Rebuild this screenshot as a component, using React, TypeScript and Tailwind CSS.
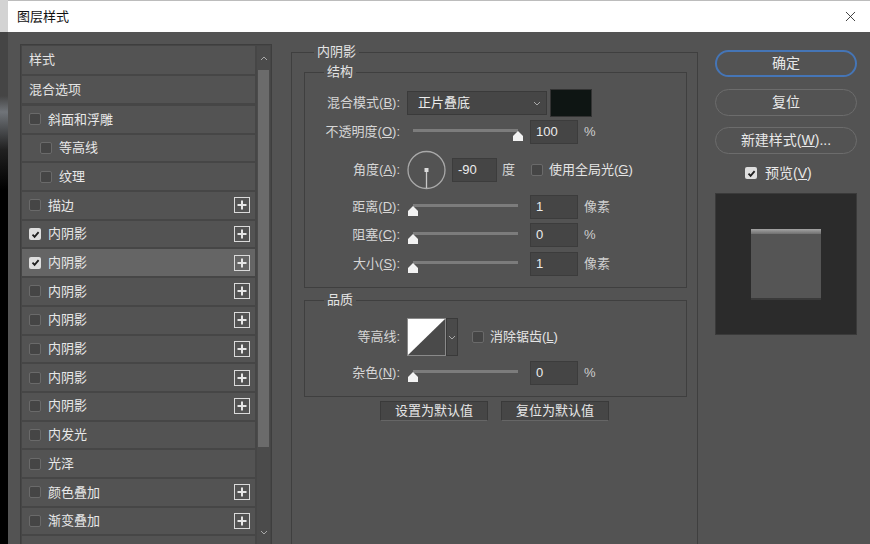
import { X } from 'lucide-react';

const items = [
  { label: '斜面和浮雕', indent: false, checked: false, plus: false },
  { label: '等高线', indent: true, checked: false, plus: false },
  { label: '纹理', indent: true, checked: false, plus: false },
  { label: '描边', indent: false, checked: false, plus: true },
  { label: '内阴影', indent: false, checked: true, plus: true },
  { label: '内阴影', indent: false, checked: true, plus: true, selected: true },
  { label: '内阴影', indent: false, checked: false, plus: true },
  { label: '内阴影', indent: false, checked: false, plus: true },
  { label: '内阴影', indent: false, checked: false, plus: true },
  { label: '内阴影', indent: false, checked: false, plus: true },
  { label: '内阴影', indent: false, checked: false, plus: true },
  { label: '内发光', indent: false, checked: false, plus: false },
  { label: '光泽', indent: false, checked: false, plus: false },
  { label: '颜色叠加', indent: false, checked: false, plus: true },
  { label: '渐变叠加', indent: false, checked: false, plus: true },
];

const Check = ({ checked }: { checked?: boolean }) =>
  checked ? (
    <span className="w-3 h-3 shrink-0 rounded-[2px] bg-[#dedede] flex items-center justify-center">
      <svg width="9" height="9" viewBox="0 0 9 9">
        <path d="M1.5 4.6 L3.6 6.8 L7.6 2.2" fill="none" stroke="#1e1e1e" strokeWidth="1.8" />
      </svg>
    </span>
  ) : (
    <span className="block w-3 h-3 shrink-0 rounded-[2px] border border-[#6a6a6a] bg-[#454545]" />
  );

const PlusBox = () => (
  <span className="w-4 h-4 border-[1.5px] border-[#dadada] flex items-center justify-center">
    <svg width="10" height="10" viewBox="0 0 10 10">
      <path d="M5 0.5 V9.5 M0.5 5 H9.5" stroke="#e6e6e6" strokeWidth="2" />
    </svg>
  </span>
);

const Slider = ({ value }: { value: number }) => {
  const x = 6 + (value / 100) * 105;
  return (
    <svg width="118" height="20" viewBox="0 0 118 20" className="ml-[7px] shrink-0">
      <rect x="6" y="7" width="105" height="3" fill="#7c7c7c" />
      <path d={`M${x} 9 L${x + 5} 14 L${x + 5} 19 L${x - 5} 19 L${x - 5} 14 Z`} fill="#f2f2f2" />
    </svg>
  );
};

const NumBox = ({ value, w = 'w-[48px]' }: { value: string; w?: string }) => (
  <div className={`${w} h-6 ml-[5px] shrink-0 bg-[#454545] border border-[#3c3c3c] pl-[5px] flex items-center text-[13px] text-[#ececec]`}>
    {value}
  </div>
);

const Label = ({ children }: { children: React.ReactNode }) => (
  <div className="w-[95px] shrink-0 text-right text-[13px] text-[#d6d6d6]">{children}</div>
);

const SliderRow = ({ label, value, num, unit, h }: { label: React.ReactNode; value: number; num: string; unit: string; h: string }) => (
  <div className={`flex items-center ${h}`}>
    <Label>{label}</Label>
    <Slider value={value} />
    <NumBox value={num} />
    <span className="ml-[6px] text-[13px] text-[#cfcfcf]">{unit}</span>
  </div>
);

const ChevronSmall = () => (
  <svg width="8" height="5" viewBox="0 0 8 5">
    <path d="M1 1 L4 4 L7 1" fill="none" stroke="#a8a8a8" strokeWidth="1" />
  </svg>
);

export default function App() {
  return (
    <div className="w-[870px] h-[544px] overflow-hidden flex bg-black font-['Liberation_Sans','Noto_Sans_CJK_SC',sans-serif] select-none">
      <div className="w-2 shrink-0 h-full bg-[linear-gradient(to_bottom,#d3d3d3_0px,#d3d3d3_32px,#454545_32px,#454545_96px,#707479_112px,#202020_150px,#000_190px)]" />
      <div className="flex-1 flex flex-col">
        {/* title bar */}
        <div className="h-8 shrink-0 bg-white border-t border-[#bcbcbc] flex items-center justify-between pl-[9px] pr-[11px]">
          <span className="text-[13px] text-[#111]">图层样式</span>
          <X size={17} strokeWidth={1.2} color="#222" />
        </div>

        <div className="flex-1 bg-[#535353] flex pl-3 overflow-hidden">
          {/* left style list */}
          <div className="mt-[12px] w-[252px] h-[504px] shrink-0 border border-[#3e3e3e] bg-[#464646] flex p-px overflow-hidden">
            <div className="w-[233px] flex flex-col">
              <div className="h-[28px] shrink-0 bg-[#535353] flex items-center pl-[7px] text-[13px] text-[#e4e4e4]">样式</div>
              <div className="h-[27px] shrink-0 mt-[2px] bg-[#535353] flex items-center pl-[7px] text-[13px] text-[#e4e4e4]">混合选项</div>
              <div className="flex flex-col gap-[2px] mt-[3px]">
                {items.map((it, i) => (
                  <div
                    key={i}
                    className={`h-[26.7px] shrink-0 flex items-center pr-[5px] text-[13px] text-[#e8e8e8] ${it.selected ? 'bg-[#656565]' : 'bg-[#535353]'} ${it.indent ? 'pl-[18px]' : 'pl-[7px]'}`}
                  >
                    <Check checked={it.checked} />
                    <span className="ml-[7px] flex-1">{it.label}</span>
                    {it.plus && <PlusBox />}
                  </div>
                ))}
                <div className="h-[26.7px] shrink-0 bg-[#535353]" />
              </div>
            </div>
            <div className="w-[13px] ml-[2px] flex flex-col bg-[#4b4b4b]">
              <div className="h-6 shrink-0 flex items-center justify-center">
                <svg width="8" height="5" viewBox="0 0 8 5">
                  <path d="M1 4 L4 1 L7 4" fill="none" stroke="#a8a8a8" strokeWidth="1" />
                </svg>
              </div>
              <div className="h-[377px] shrink-0 mx-px bg-[#6b6b6b]" />
              <div className="flex-1" />
              <div className="h-[16px] shrink-0 mb-[6px] flex items-center justify-center">
                <ChevronSmall />
              </div>
            </div>
          </div>

          {/* middle settings */}
          <fieldset className="ml-[19px] mt-[12px] w-[407px] h-[520px] shrink-0 border border-[#3f3f3f]">
            <legend className="ml-[22px] px-[3px] text-[13px] leading-4 text-[#e4e4e4]">内阴影</legend>

            <fieldset className="ml-[12px] mt-[4px] w-[383px] border border-[#3f3f3f] pt-2 pb-[9px]">
              <legend className="ml-[19px] px-[3px] text-[13px] leading-4 text-[#e4e4e4]">结构</legend>

              <div className="flex items-center h-[30px]">
                <Label>
                  混合模式(<u>B</u>):
                </Label>
                <div className="ml-[7px] w-[140px] h-6 bg-[#464646] border border-[#3a3a3a] flex items-center justify-between pl-[10px] pr-[5px] text-[13px] text-[#ececec]">
                  正片叠底
                  <ChevronSmall />
                </div>
                <div className="ml-[3px] w-[42px] h-7 bg-[#0e1513] border border-[#333]" />
              </div>

              <SliderRow label={<>不透明度(<u>O</u>):</>} value={100} num="100" unit="%" h="h-[28px]" />

              <div className="flex items-center h-[48px]">
                <Label>
                  角度(<u>A</u>):
                </Label>
                <svg width="40" height="40" viewBox="0 0 40 40" className="ml-[7px] shrink-0">
                  <circle cx="19.5" cy="20" r="18.5" fill="none" stroke="#a9a9a9" strokeWidth="1.3" />
                  <line x1="19.5" y1="20" x2="19.5" y2="38" stroke="#c9c9c9" strokeWidth="1.3" />
                  <rect x="17.5" y="18" width="4" height="4" fill="#dcdcdc" />
                </svg>
                <NumBox value="-90" w="w-[45px]" />
                <span className="ml-[5px] text-[13px] text-[#d6d6d6]">度</span>
                <span className="ml-[16px]">
                  <Check />
                </span>
                <span className="ml-[6px] text-[13px] text-[#e4e4e4]">
                  使用全局光(<u>G</u>)
                </span>
              </div>

              <SliderRow label={<>距离(<u>D</u>):</>} value={0} num="1" unit="像素" h="h-[26px]" />
              <SliderRow label={<>阻塞(<u>C</u>):</>} value={0} num="0" unit="%" h="h-[29px]" />
              <SliderRow label={<>大小(<u>S</u>):</>} value={0} num="1" unit="像素" h="h-[29px]" />
            </fieldset>

            <fieldset className="ml-[12px] mt-[4px] w-[383px] border border-[#3f3f3f] pt-[8px] pb-2">
              <legend className="ml-[19px] px-[3px] text-[13px] leading-4 text-[#e4e4e4]">品质</legend>

              <div className="flex items-center h-[42px]">
                <Label>等高线:</Label>
                <div className="ml-[7px] flex h-[38px]">
                  <svg width="39" height="38" viewBox="0 0 39 38" className="border border-[#8a8a8a]">
                    <rect width="39" height="38" fill="#4a4a4a" />
                    <path d="M0 0 H39 L0 38 Z" fill="#ffffff" />
                  </svg>
                  <div className="w-[12px] h-full bg-[#4a4a4a] border border-[#3a3a3a] flex items-center justify-center">
                    <ChevronSmall />
                  </div>
                </div>
                <span className="ml-[14px]">
                  <Check />
                </span>
                <span className="ml-[6px] text-[13px] text-[#e4e4e4]">
                  消除锯齿(<u>L</u>)
                </span>
              </div>

              <SliderRow label={<>杂色(<u>N</u>):</>} value={0} num="0" unit="%" h="h-[30px]" />
            </fieldset>

            <div className="flex justify-center gap-[13px] mt-1">
              <div className="w-[108px] h-5 bg-[#464646] border border-[#3a3a3a] border-b-[#666] flex items-center justify-center text-[13px] text-[#e6e6e6]">
                设置为默认值
              </div>
              <div className="w-[108px] h-5 bg-[#464646] border border-[#3a3a3a] border-b-[#666] flex items-center justify-center text-[13px] text-[#e6e6e6]">
                复位为默认值
              </div>
            </div>
          </fieldset>

          {/* right column */}
          <div className="ml-[17px] pt-[18px] w-[142px] shrink-0 flex flex-col">
            <div className="h-[27px] rounded-full border-2 border-[#4575b6] flex items-center justify-center text-[14px] text-[#e8e8e8]">
              确定
            </div>
            <div className="mt-3 h-[27px] rounded-full border-[1.5px] border-[#6c6c6c] flex items-center justify-center text-[14px] text-[#e8e8e8]">
              复位
            </div>
            <div className="mt-[11px] h-[27px] rounded-full border-[1.5px] border-[#6c6c6c] flex items-center justify-center text-[14px] text-[#e8e8e8]">
              新建样式(<u>W</u>)...
            </div>
            <div className="mt-[8px] h-[22px] flex items-center pl-[30px] gap-[8px] text-[14px] text-[#e8e8e8]">
              <Check checked />
              <span>
                预览(<u>V</u>)
              </span>
            </div>
            <div className="mt-[9px] w-[142px] h-[142px] bg-[#2b2b2b] border border-[#3a3a3a] flex items-center justify-center">
              <div className="w-[70px] h-[71px] bg-[#555] flex flex-col">
                <div className="h-[5px] bg-[linear-gradient(to_bottom,#a4a4a4,#707070)]" />
                <div className="flex-1" />
                <div className="h-[2px] bg-[#3a3a3a]" />
              </div>
            </div>
          </div>
        </div>
      </div>
    </div>
  );
}
